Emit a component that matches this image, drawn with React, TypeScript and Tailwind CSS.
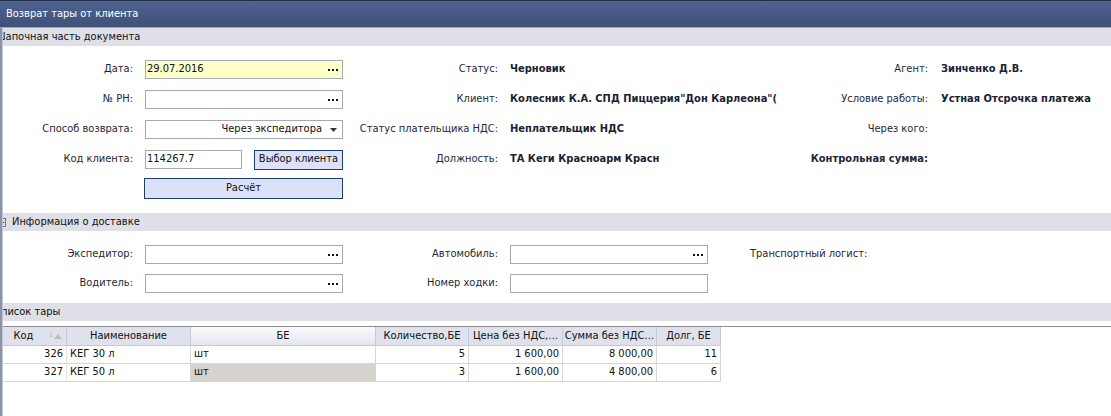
import React from "react";

const FONT = { fontFamily: '"DejaVu Sans Condensed", "Liberation Sans", Arial, sans-serif' };

function Dots() {
  return (
    <span className="flex gap-[2px] items-center">
      <span className="w-[2px] h-[2px] bg-[#111]" />
      <span className="w-[2px] h-[2px] bg-[#111]" />
      <span className="w-[2px] h-[2px] bg-[#111]" />
    </span>
  );
}

function Field({
  value,
  width = "w-[198px]",
  bg = "bg-white",
  dots = true,
}: {
  value?: string;
  width?: string;
  bg?: string;
  dots?: boolean;
}) {
  return (
    <div
      className={`${width} ${bg} h-[19px] border border-[#a5a9b4] flex items-center justify-between pl-[1px] pr-[4px] shrink-0`}
    >
      <span className="text-[11px] text-[#111]">{value}</span>
      {dots && <Dots />}
    </div>
  );
}

function Label({ w, children, bold }: { w: string; children?: React.ReactNode; bold?: boolean }) {
  return (
    <div
      className={`${w} shrink-0 flex justify-end whitespace-nowrap text-[11px] text-[#1e2837] ${bold ? "font-bold" : ""}`}
    >
      {children}
    </div>
  );
}

function Value({ w, children }: { w?: string; children?: React.ReactNode }) {
  return (
    <div className={`${w ?? ""} shrink-0 whitespace-nowrap text-[11px] font-bold text-[#1b2232]`}>
      {children}
    </div>
  );
}

function SectionHeader({ children, shift }: { children: React.ReactNode; shift: string }) {
  return (
    <div className="h-[18px] bg-[#dfdfe8] overflow-hidden flex items-center">
      <div className={`${shift} whitespace-nowrap text-[11px] text-[#111] flex items-center`}>{children}</div>
    </div>
  );
}

const cols = [
  { title: "Код", w: "w-[64px]", align: "text-right" },
  { title: "Наименование", w: "w-[124px]", align: "text-left" },
  { title: "БЕ", w: "w-[185px]", align: "text-left" },
  { title: "Количество,БЕ", w: "w-[93px]", align: "text-right" },
  { title: "Цена без НДС,…", w: "w-[94px]", align: "text-right" },
  { title: "Сумма без НДС…", w: "w-[94px]", align: "text-right" },
  { title: "Долг, БЕ", w: "w-[64px]", align: "text-right" },
];

const rows = [
  ["326", "КЕГ 30 л", "шт", "5", "1 600,00", "8 000,00", "11"],
  ["327", "КЕГ 50 л", "шт", "3", "1 600,00", "4 800,00", "6"],
];

export default function App() {
  return (
    <div className="w-[1111px] h-[416px] bg-white overflow-hidden flex flex-col" style={FONT}>
      <div className="h-[28px] shrink-0 bg-gradient-to-b from-[#4f6391] to-[#3d5078] border-t border-[#27304a] border-b border-b-[#9aa6c4] flex items-center pl-[6px]">
        <span className="text-[11px] text-white">Возврат тары от клиента</span>
      </div>

      <div className="flex flex-1">
        <div className="w-[3px] shrink-0 bg-[#8a93a9] border-r border-[#c3c8d4]" />
        <div className="flex-1 flex flex-col">
          <SectionHeader shift="ml-[-8px]">Шапочная часть документа</SectionHeader>

          <div className="pt-[14px] flex flex-col gap-[11px]">
            <div className="flex items-center h-[19px]">
              <Label w="w-[130px]">Дата:</Label>
              <div className="ml-[12px]">
                <Field value="29.07.2016" bg="bg-[#ffffc8]" />
              </div>
              <Label w="w-[155px]">Статус:</Label>
              <div className="ml-[12px]">
                <Value w="w-[280px]">Черновик</Value>
              </div>
              <Label w="w-[138px]">Агент:</Label>
              <div className="ml-[13px]">
                <Value>Зинченко Д.В.</Value>
              </div>
            </div>

            <div className="flex items-center h-[19px]">
              <Label w="w-[130px]">№ РН:</Label>
              <div className="ml-[12px]">
                <Field />
              </div>
              <Label w="w-[155px]">Клиент:</Label>
              <div className="ml-[12px]">
                <Value w="w-[280px]">Колесник К.А. СПД Пиццерия"Дон Карлеона"(</Value>
              </div>
              <Label w="w-[138px]">Условие работы:</Label>
              <div className="ml-[13px]">
                <Value>Устная Отсрочка платежа</Value>
              </div>
            </div>

            <div className="flex items-center h-[19px]">
              <Label w="w-[130px]">Способ возврата:</Label>
              <div className="ml-[12px] w-[198px] h-[19px] border border-[#a5a9b4] bg-white flex items-center justify-end pr-[5px] gap-[8px] shrink-0">
                <span className="text-[11px] text-[#111]">Через экспедитора</span>
                <svg width="7" height="4" viewBox="0 0 7 4">
                  <path d="M0 0h7L3.5 4z" fill="#333" />
                </svg>
              </div>
              <Label w="w-[155px]">Статус плательщика НДС:</Label>
              <div className="ml-[12px]">
                <Value w="w-[280px]">Неплательщик НДС</Value>
              </div>
              <Label w="w-[138px]">Через кого:</Label>
            </div>

            <div className="flex items-center h-[19px]">
              <Label w="w-[130px]">Код клиента:</Label>
              <div className="ml-[12px]">
                <Field value="114267.7" width="w-[97px]" dots={false} />
              </div>
              <button className="ml-[12px] w-[89px] h-[20px] border border-[#1e3d72] bg-[#dde1f8] text-[11px] text-[#111] flex items-center justify-center shrink-0">
                Выбор клиента
              </button>
              <Label w="w-[155px]">Должность:</Label>
              <div className="ml-[12px]">
                <Value w="w-[280px]">ТА Кеги Красноарм Красн</Value>
              </div>
              <Label w="w-[138px]" bold>
                Контрольная сумма:
              </Label>
            </div>

            <div className="flex items-center h-[21px] mt-[-2px]">
              <button className="ml-[141px] w-[199px] h-[21px] border border-[#1e3d72] bg-[#dde1f8] text-[11px] text-[#111] flex items-center justify-center">
                Расчёт
              </button>
            </div>
          </div>

          <div className="mt-[14px]">
            <SectionHeader shift="ml-[-6px]">
              <span className="w-[9px] h-[9px] border border-[#777] flex items-center justify-center mr-[6px]">
                <span className="w-[5px] h-[1px] bg-[#333]" />
              </span>
              Информация о доставке
            </SectionHeader>
          </div>

          <div className="pt-[14px] flex flex-col gap-[10px]">
            <div className="flex items-center h-[19px]">
              <Label w="w-[130px]">Экспедитор:</Label>
              <div className="ml-[12px]">
                <Field />
              </div>
              <Label w="w-[155px]">Автомобиль:</Label>
              <div className="ml-[12px]">
                <Field />
              </div>
              <div className="ml-[42px] text-[11px] text-[#1e2837] whitespace-nowrap">Транспортный логист:</div>
            </div>
            <div className="flex items-center h-[19px]">
              <Label w="w-[130px]">Водитель:</Label>
              <div className="ml-[12px]">
                <Field />
              </div>
              <Label w="w-[155px]">Номер ходки:</Label>
              <div className="ml-[12px]">
                <Field dots={false} />
              </div>
            </div>
          </div>

          <div className="mt-[10px]">
            <SectionHeader shift="ml-[-9px]">Список тары</SectionHeader>
          </div>

          <div className="mt-[5px] border-t border-[#8c8c8c]">
            <div className="flex h-[19px]">
              {cols.map((c, i) => (
                <div
                  key={c.title}
                  className={`${c.w} shrink-0 border-r border-b border-[#c5c9d6] flex items-center justify-center text-[11px] text-[#111] relative ${
                    i === 2 ? "bg-gradient-to-b from-[#fbfbfd] to-[#e3e5ee]" : "bg-[#dfe2ec]"
                  }`}
                >
                  <span className={i === 0 ? "mr-[22px]" : ""}>{c.title}</span>
                  {i === 0 && (
                    <span className="absolute right-[4px] top-[5px] flex items-end gap-[1px]">
                      <span className="text-[7px] leading-[7px] text-[#b5bac8]">1</span>
                      <svg width="8" height="5" viewBox="0 0 8 5">
                        <path d="M0 5L4 0l4 5z" fill="#b9bdca" />
                      </svg>
                    </span>
                  )}
                </div>
              ))}
            </div>
            {rows.map((r, ri) => (
              <div key={ri} className="flex h-[18px]">
                {r.map((v, ci) => (
                  <div
                    key={ci}
                    className={`${cols[ci].w} shrink-0 border-r border-b border-[#d9d6cf] ${cols[ci].align} text-[11px] text-[#111] px-[3px] flex items-center ${
                      cols[ci].align === "text-right" ? "justify-end" : "justify-start"
                    } ${ri === 1 && ci === 2 ? "bg-[#d6d3ce]" : "bg-white"} ${ci === 0 ? "border-r-[#e4e2dc]" : ""}`}
                  >
                    {v}
                  </div>
                ))}
              </div>
            ))}
          </div>
        </div>
      </div>
    </div>
  );
}
